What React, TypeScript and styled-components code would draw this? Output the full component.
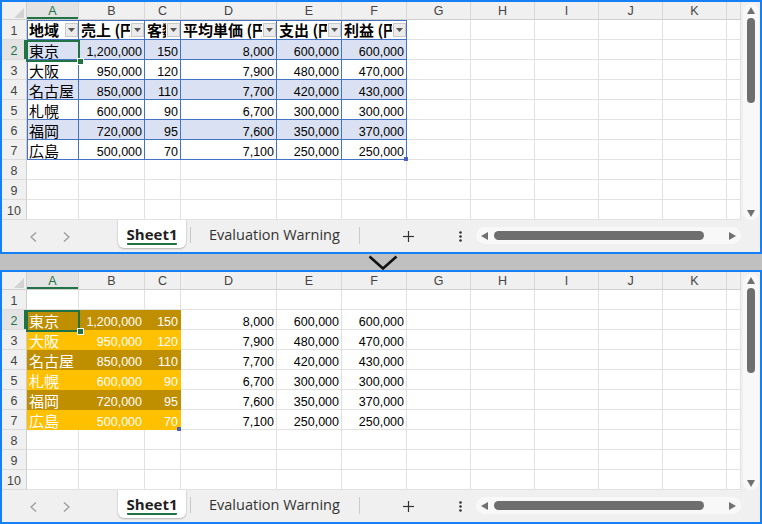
import React from "react";
import styled, { createGlobalStyle } from "styled-components";

const Global = createGlobalStyle`
  html, body { margin: 0; padding: 0; background: #ffffff; }
  body { font-family: "Liberation Sans", Arial, sans-serif; }
`;

const FRAME = "#1580f5";
const GREEN = "#217346";
const GRID = "#e1e1e1";
const TBLUE = "#4472c4";
const BAND = "#d9e1f2";
const GOLD_DARK = "#bf8f00";
const GOLD = "#ffc000";

const COLS = [52, 66, 36, 96, 65, 65, 64, 64, 64, 64, 64, 14];
const LETTERS = ["A", "B", "C", "D", "E", "F", "G", "H", "I", "J", "K", ""];

const HEADERS = ["地域", "売上 (円)", "客数", "平均単価 (円)", "支出 (円)", "利益 (円)"];
const DATA = [
  ["東京", "1,200,000", "150", "8,000", "600,000", "600,000"],
  ["大阪", "950,000", "120", "7,900", "480,000", "470,000"],
  ["名古屋", "850,000", "110", "7,700", "420,000", "430,000"],
  ["札幌", "600,000", "90", "6,700", "300,000", "300,000"],
  ["福岡", "720,000", "95", "7,600", "350,000", "370,000"],
  ["広島", "500,000", "70", "7,100", "250,000", "250,000"],
];

const Page = styled.div`
  width: 762px;
  height: 524px;
  display: flex;
  flex-direction: column;
  overflow: hidden;
`;

const Panel = styled.section`
  height: 254px;
  box-sizing: border-box;
  border: 2px solid ${FRAME};
  display: flex;
  flex-direction: column;
  background: #ffffff;
`;

const Divider = styled.div`
  height: 16px;
  background: #c0c0c0;
  display: flex;
  justify-content: center;
  align-items: center;
  padding-left: 3px;
`;

const Body = styled.div`
  height: 218px;
  display: flex;
`;

const GridWrap = styled.div`
  position: relative;
  width: 739px;
  display: grid;
  grid-template-columns: 25px ${COLS.map((c) => c + "px").join(" ")};
  grid-template-rows: 18px repeat(10, 20px);
  overflow: hidden;
  background: #ffffff;
`;

const HeadBase = styled.div<{ $sel?: boolean }>`
  box-sizing: border-box;
  background: ${(p) => (p.$sel ? "#e3e3e3" : "#f0f0f0")};
  color: ${(p) => (p.$sel ? GREEN : "#444444")};
  font-family: "Liberation Sans", Arial, sans-serif;
  font-size: 12.5px;
  display: flex;
  align-items: center;
  justify-content: center;
`;

const Corner = styled(HeadBase)`
  border-right: 1px solid #cfcfcf;
  border-bottom: 1px solid #cfcfcf;
  justify-content: flex-end;
  align-items: flex-end;
  padding: 0 2px 1px 0;
`;

const ColHead = styled(HeadBase)`
  border-right: 1px solid #d8d8d8;
  border-bottom: 1px solid #cfcfcf;
  box-shadow: ${(p) => (p.$sel ? `inset 0 -2px 0 ${GREEN}` : "none")};
  padding-top: 1px;
`;

const RowHead = styled(HeadBase)`
  border-right: 1px solid #cfcfcf;
  border-bottom: 1px solid #dcdcdc;
  box-shadow: ${(p) => (p.$sel ? `inset -2px 0 0 ${GREEN}` : "none")};
  padding-top: 3px;
`;

type CellProps = {
  $bg: string;
  $line: string;
  $fg: string;
  $num?: boolean;
  $edgeL?: string;
};

const Cell = styled.div<CellProps>`
  box-sizing: border-box;
  min-width: 0;
  display: flex;
  align-items: flex-end;
  justify-content: ${(p) => (p.$num ? "flex-end" : "flex-start")};
  padding: 0 2px 0 2px;
  background: ${(p) => p.$bg};
  color: ${(p) => p.$fg};
  border-right: 1px solid ${(p) => p.$line};
  border-bottom: 1px solid ${(p) => p.$line};
  box-shadow: ${(p) => (p.$edgeL ? `inset 1px 0 0 ${p.$edgeL}` : "none")};
  white-space: nowrap;
  font-family: ${(p) =>
    p.$num
      ? `"Liberation Sans", Arial, sans-serif`
      : `"Noto Sans CJK JP", "Noto Sans", sans-serif`};
  font-size: ${(p) => (p.$num ? "12.5px" : "15px")};
  line-height: ${(p) => (p.$num ? "13px" : "17px")};
`;

const HeadCell = styled.div<{ $edgeL?: boolean }>`
  box-sizing: border-box;
  min-width: 0;
  display: flex;
  align-items: center;
  padding: 0 0 0 2px;
  background: #ffffff;
  color: #000000;
  border-right: 1px solid ${TBLUE};
  border-bottom: 1px solid ${TBLUE};
  box-shadow: inset 0 1px 0 ${TBLUE}${(p) => (p.$edgeL ? `, inset 1px 0 0 ${TBLUE}` : "")};
  font-family: "Noto Sans CJK JP", "Noto Sans", sans-serif;
  font-weight: 700;
  font-size: 15px;
  line-height: 18px;
  white-space: nowrap;
`;

const HeadText = styled.span`
  flex: 1;
  min-width: 0;
  overflow: hidden;
  padding-top: 1px;
`;

const FilterBtn = styled.span`
  flex-shrink: 0;
  box-sizing: border-box;
  width: 13px;
  height: 14px;
  margin-left: 1px;
  border: 1px solid #c8c8c8;
  background: #ebebeb;
  display: flex;
  align-items: center;
  justify-content: center;
`;

const Selection = styled.div`
  position: absolute;
  left: 24px;
  top: 38px;
  width: 54px;
  height: 22px;
  box-sizing: border-box;
  border: 2px solid ${GREEN};
  pointer-events: none;
`;

const FillHandle = styled.div`
  position: absolute;
  left: 76px;
  top: 57px;
  width: 5px;
  height: 5px;
  background: ${GREEN};
  box-shadow: 0 0 0 1px #ffffff;
`;

const Marker = styled.div<{ $x: number }>`
  position: absolute;
  left: ${(p) => p.$x}px;
  top: 155px;
  width: 4px;
  height: 4px;
  background: #4d62c0;
`;

const VScroll = styled.div`
  width: 19px;
  box-sizing: border-box;
  background: #f0f0f0;
  display: flex;
  flex-direction: column;
  align-items: center;
  padding-top: 2px;
`;

const VTrack = styled.div`
  width: 16px;
  flex: 1;
  box-sizing: border-box;
  background: #f8f8f8;
  border-radius: 8px;
  display: flex;
  flex-direction: column;
  align-items: center;
  padding: 3px 0 3px;
`;

const VThumb = styled.div`
  width: 8px;
  height: 85px;
  margin-top: 4px;
  border-radius: 4px;
  background: #6e6e6e;
`;

const PushEnd = styled.div`
  margin-top: auto;
  display: flex;
`;

const TabBar = styled.div`
  height: 32px;
  background: #f0f0f0;
  display: flex;
  align-items: flex-start;
`;

const Nav = styled.div`
  width: 116px;
  flex-shrink: 0;
  display: flex;
  gap: 7px;
  padding-left: 18px;
  box-sizing: border-box;
  height: 32px;
  align-items: center;
`;

const NavBtn = styled.div`
  width: 26px;
  display: flex;
  justify-content: center;
  padding-top: 1px;
`;

const SheetTab = styled.div`
  width: 68px;
  height: 28px;
  flex-shrink: 0;
  box-sizing: border-box;
  background: #ffffff;
  border-radius: 0 0 6px 6px;
  box-shadow: 0 1px 2px rgba(0, 0, 0, 0.22), 0 0 0 0.5px rgba(0, 0, 0, 0.08);
  display: flex;
  justify-content: center;
  align-items: flex-start;
  padding-top: 6px;
`;

const SheetName = styled.span`
  display: inline-block;
  font-family: "Open Sans", "DejaVu Sans", sans-serif;
  font-weight: 700;
  font-size: 15px;
  line-height: 17px;
  color: #1f1f1f;
  border-bottom: 2.5px solid ${GREEN};
  border-radius: 1px;
`;

const TabSep = styled.div`
  width: 1px;
  height: 16px;
  background: #c8c8c8;
  margin: 7px 0 0 4px;
  flex-shrink: 0;
`;

const OtherTab = styled.div`
  flex-shrink: 0;
  padding: 6px 19px 0 18px;
  font-family: "Open Sans", "DejaVu Sans", sans-serif;
  font-size: 14.5px;
  line-height: 17px;
  color: #333333;
  white-space: nowrap;
`;

const PlainSep = styled.div`
  width: 1px;
  height: 17px;
  background: #cccccc;
  margin-top: 7px;
  flex-shrink: 0;
`;

const IconBtn = styled.div<{ $w: number; $ml: number }>`
  width: ${(p) => p.$w}px;
  margin-left: ${(p) => p.$ml}px;
  height: 32px;
  flex-shrink: 0;
  display: flex;
  align-items: center;
  justify-content: center;
`;

const HTrack = styled.div`
  width: 265px;
  height: 17px;
  margin: 7px 19px 0 auto;
  flex-shrink: 0;
  box-sizing: border-box;
  background: #f8f8f8;
  border-radius: 9px;
  display: flex;
  align-items: center;
  padding: 0 5px;
`;

const HThumb = styled.div`
  width: 210px;
  height: 9px;
  margin-left: 6px;
  border-radius: 5px;
  background: #6e6e6e;
`;

const HEnd = styled.div`
  margin-left: auto;
  display: flex;
`;

const Tri = ({ dir }: { dir: "up" | "down" | "left" | "right" }) => {
  const pts: Record<string, string> = {
    up: "0,7 4,0 8,7",
    down: "0,0 8,0 4,7",
    left: "7,0 7,8 0,4",
    right: "0,0 0,8 7,4",
  };
  const vertical = dir === "up" || dir === "down";
  return (
    <svg width={vertical ? 8 : 7} height={vertical ? 7 : 8} viewBox={vertical ? "0 0 8 7" : "0 0 7 8"}>
      <polygon points={pts[dir]} fill="#707070" />
    </svg>
  );
};

type Kind = "top" | "bottom";

function Sheet({ kind }: { kind: Kind }) {
  const cells: React.ReactNode[] = [];
  cells.push(
    <Corner key="corner">
      <svg width="10" height="10" viewBox="0 0 10 10">
        <polygon points="10,0 10,10 0,10" fill="#d2d2d2" />
      </svg>
    </Corner>
  );
  LETTERS.forEach((l, i) =>
    cells.push(
      <ColHead key={"h" + i} $sel={i === 0}>
        {l}
      </ColHead>
    )
  );
  for (let r = 0; r < 10; r++) {
    cells.push(
      <RowHead key={"r" + r} $sel={r === 1}>
        {r + 1}
      </RowHead>
    );
    for (let c = 0; c < COLS.length; c++) {
      const key = `c${r}-${c}`;
      if (kind === "top" && r === 0 && c < 6) {
        cells.push(
          <HeadCell key={key} $edgeL={c === 0}>
            <HeadText>{HEADERS[c]}</HeadText>
            <FilterBtn>
              <svg width="7" height="4" viewBox="0 0 7 4">
                <polygon points="0,0 7,0 3.5,4" fill="#555555" />
              </svg>
            </FilterBtn>
          </HeadCell>
        );
        continue;
      }
      const isData = r >= 1 && r <= 6 && c < 6;
      if (!isData) {
        cells.push(<Cell key={key} $bg="#ffffff" $line={GRID} $fg="#000" />);
        continue;
      }
      const text = DATA[r - 1][c];
      const num = c > 0;
      if (kind === "top") {
        cells.push(
          <Cell
            key={key}
            $bg={r % 2 === 1 ? BAND : "#ffffff"}
            $line={TBLUE}
            $fg="#000000"
            $num={num}
            $edgeL={c === 0 ? TBLUE : undefined}
          >
            {text}
          </Cell>
        );
      } else if (c < 3) {
        const bg = r % 2 === 1 ? GOLD_DARK : GOLD;
        cells.push(
          <Cell key={key} $bg={bg} $line={bg} $fg="#ffffff" $num={num}>
            {text}
          </Cell>
        );
      } else {
        cells.push(
          <Cell key={key} $bg="#ffffff" $line={GRID} $fg="#000000" $num={num}>
            {text}
          </Cell>
        );
      }
    }
  }

  return (
    <Panel>
      <Body>
        <GridWrap>
          {cells}
          <Selection />
          <FillHandle />
          <Marker $x={kind === "top" ? 402 : 175} />
        </GridWrap>
        <VScroll>
          <VTrack>
            <Tri dir="up" />
            <VThumb />
            <PushEnd>
              <Tri dir="down" />
            </PushEnd>
          </VTrack>
        </VScroll>
      </Body>
      <TabBar>
        <Nav>
          <NavBtn>
            <svg width="7" height="10" viewBox="0 0 7 10">
              <polyline points="6,0.5 1,5 6,9.5" fill="none" stroke="#9c9c9c" strokeWidth="1.3" />
            </svg>
          </NavBtn>
          <NavBtn>
            <svg width="7" height="10" viewBox="0 0 7 10">
              <polyline points="1,0.5 6,5 1,9.5" fill="none" stroke="#9c9c9c" strokeWidth="1.3" />
            </svg>
          </NavBtn>
        </Nav>
        <SheetTab>
          <SheetName>Sheet1</SheetName>
        </SheetTab>
        <TabSep />
        <OtherTab>Evaluation Warning</OtherTab>
        <PlainSep />
        <IconBtn $w={60} $ml={19}>
          <svg width="11" height="11" viewBox="0 0 11 11">
            <line x1="5.5" y1="0" x2="5.5" y2="11" stroke="#333" strokeWidth="1.2" />
            <line x1="0" y1="5.5" x2="11" y2="5.5" stroke="#333" strokeWidth="1.2" />
          </svg>
        </IconBtn>
        <IconBtn $w={20} $ml={12}>
          <svg width="3" height="11" viewBox="0 0 3 11">
            <circle cx="1.5" cy="1.5" r="1.3" fill="#333" />
            <circle cx="1.5" cy="5.5" r="1.3" fill="#333" />
            <circle cx="1.5" cy="9.5" r="1.3" fill="#333" />
          </svg>
        </IconBtn>
        <HTrack>
          <Tri dir="left" />
          <HThumb />
          <HEnd>
            <Tri dir="right" />
          </HEnd>
        </HTrack>
      </TabBar>
    </Panel>
  );
}

export default function App() {
  return (
    <>
      <Global />
      <Page>
        <Sheet kind="top" />
        <Divider>
          <svg width="30" height="15" viewBox="0 0 30 15">
            <polyline points="1.5,1.5 15,13.5 28.5,1.5" fill="none" stroke="#111" strokeWidth="2.6" />
          </svg>
        </Divider>
        <Sheet kind="bottom" />
      </Page>
    </>
  );
}
